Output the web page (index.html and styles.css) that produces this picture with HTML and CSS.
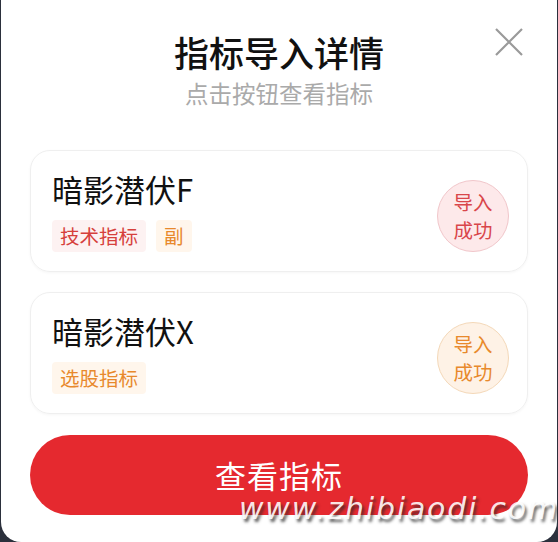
FILE: index.html
```html
<!DOCTYPE html>
<html lang="zh">
<head>
<meta charset="utf-8">
<link rel="stylesheet" href="styles.css">
</head>
<body>
<div class="modal">
  <header class="head">
    <h1 class="title">指标导入详情</h1>
    <p class="subtitle">点击按钮查看指标</p>
    <button class="close" aria-label="关闭">
      <svg width="28" height="28" viewBox="0 0 28 28"><path d="M1 1 L27 27 M27 1 L1 27" stroke="#9a9a9a" stroke-width="2.2" fill="none"/></svg>
    </button>
  </header>
  <div class="list">
    <div class="card">
      <div class="info">
        <div class="name">暗影潜伏F</div>
        <div class="tags">
          <span class="tag red">技术指标</span>
          <span class="tag orange">副</span>
        </div>
      </div>
      <div class="badge red">导入<br>成功</div>
    </div>
    <div class="card">
      <div class="info">
        <div class="name">暗影潜伏X</div>
        <div class="tags">
          <span class="tag orange">选股指标</span>
        </div>
      </div>
      <div class="badge orange">导入<br>成功</div>
    </div>
  </div>
  <button class="cta">查看指标</button>
  <span class="watermark">www.zhibiaodi.com</span>
</div>
</body>
</html>
```
FILE: styles.css
```css
html, body {
  margin: 0;
  padding: 0;
}
body {
  background: #2b303c;
  width: 558px;
  height: 542px;
  overflow: hidden;
  font-family: "Noto Sans CJK SC", "Noto Sans", sans-serif;
}
.modal {
  position: relative;
  margin-left: 1px;
  width: 556px;
  height: 542px;
  background: #ffffff;
  border-radius: 0 0 20px 20px;
  box-sizing: border-box;
  padding: 30px 29px 0 29px;
  display: flex;
  flex-direction: column;
}
.head {
  display: flex;
  flex-direction: column;
  align-items: center;
}
.title {
  margin: 0;
  font-size: 35px;
  line-height: 44px;
  font-weight: 500;
  color: #111;
}
.subtitle {
  margin: 4px 0 0 0;
  font-size: 23.5px;
  line-height: 30px;
  color: #aaaaaa;
}
.close {
  position: absolute;
  top: 28px;
  right: 34px;
  width: 28px;
  height: 28px;
  padding: 0;
  border: 0;
  background: none;
}
.close svg { display: block; }
.list {
  margin-top: 42px;
  display: flex;
  flex-direction: column;
  gap: 20px;
}
.card {
  height: 122px;
  box-sizing: border-box;
  border: 1px solid #efefef;
  border-radius: 20px;
  box-shadow: 0 1px 3px rgba(0,0,0,0.04);
  padding: 20px 18px 0 21px;
  display: flex;
  justify-content: space-between;
  align-items: flex-start;
}
.name {
  font-size: 31px;
  line-height: 36px;
  color: #111;
}
.tags {
  margin-top: 13px;
  display: flex;
  gap: 10px;
}
.tag {
  height: 32px;
  line-height: 32px;
  padding: 0 8px;
  font-size: 19.5px;
  border-radius: 4px;
}
.tag.red { color: #d6403c; background: #fdf2f2; }
.tag.orange { color: #e8892c; background: #fff6ec; }
.badge {
  margin-top: 9px;
  width: 72px;
  height: 72px;
  box-sizing: border-box;
  border-radius: 50%;
  display: flex;
  align-items: center;
  justify-content: center;
  text-align: center;
  font-size: 19.5px;
  line-height: 28px;
}
.badge.red { color: #d9464a; background: #fde9ea; border: 1px solid #f1c6ca; }
.badge.orange { color: #e8892c; background: #fef2e6; border: 1px solid #f4d8b8; }
.cta {
  margin-top: 21px;
  height: 80px;
  border: 0;
  border-radius: 40px;
  background: #e5292f;
  color: #fff;
  font-family: "Noto Sans CJK SC", "Noto Sans", sans-serif;
  font-size: 31px;
  line-height: 36px;
  letter-spacing: 1px;
}
.watermark {
  position: absolute;
  left: 238px;
  top: 495px;
  font-family: "DejaVu Sans", sans-serif;
  font-style: italic;
  font-size: 30px;
  line-height: 28px;
  letter-spacing: 1.8px;
  color: rgba(255,255,255,0.9);
  text-shadow: 2px 3px 3px rgba(40,40,40,0.75);
}
```
